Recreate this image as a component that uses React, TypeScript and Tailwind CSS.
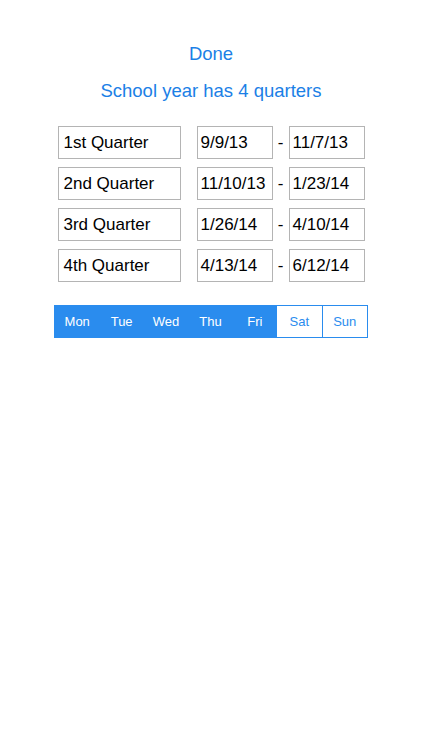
const QUARTERS = [
  { name: '1st Quarter', start: '9/9/13', end: '11/7/13' },
  { name: '2nd Quarter', start: '11/10/13', end: '1/23/14' },
  { name: '3rd Quarter', start: '1/26/14', end: '4/10/14' },
  { name: '4th Quarter', start: '4/13/14', end: '6/12/14' },
];

const DAYS = [
  { label: 'Mon', on: true },
  { label: 'Tue', on: true },
  { label: 'Wed', on: true },
  { label: 'Thu', on: true },
  { label: 'Fri', on: true },
  { label: 'Sat', on: false },
  { label: 'Sun', on: false },
];

export default function App() {
  return (
    <div
      className="w-[422px] h-[750px] bg-white flex flex-col items-center"
      style={{ fontFamily: '"Liberation Sans", Arial, sans-serif' }}
    >
      <div className="mt-[42px] h-[24px] leading-[24px] text-[18.5px] text-[#1b80e6]">Done</div>
      <div className="mt-[13px] h-[24px] leading-[24px] text-[18.5px] text-[#1b80e6]">School year has 4 quarters</div>

      {/* Quarter rows */}
      <div className="mt-[23px] flex flex-col gap-[8px] w-[307px]">
        {QUARTERS.map((q) => (
          <div key={q.name} className="flex items-center h-[33px]">
            <div className="w-[123px] h-full border-[1.5px] border-[#b4b4b4] pl-[5px] flex items-center text-[17px] text-black">
              {q.name}
            </div>
            <div className="w-[76px] h-full ml-[16px] border-[1.5px] border-[#b4b4b4] pl-[3px] flex items-center text-[17px] text-black">
              {q.start}
            </div>
            <div className="w-[16px] text-center text-[17px] text-black">-</div>
            <div className="w-[76px] h-full border-[1.5px] border-[#b4b4b4] pl-[3px] flex items-center text-[17px] text-black">
              {q.end}
            </div>
          </div>
        ))}
      </div>

      {/* Weekday selector */}
      <div className="mt-[23px] w-[314px] h-[33px] flex border border-[#2a8cee]">
        {DAYS.map((d, i) => (
          <div
            key={d.label}
            className={
              'flex-1 flex items-center justify-center text-[13px] ' +
              (d.on ? 'bg-[#2a8cee] text-white' : 'bg-white text-[#2a8cee]') +
              (!d.on && i < DAYS.length - 1 ? ' border-r border-[#2a8cee]' : '')
            }
          >
            {d.label}
          </div>
        ))}
      </div>
    </div>
  );
}
